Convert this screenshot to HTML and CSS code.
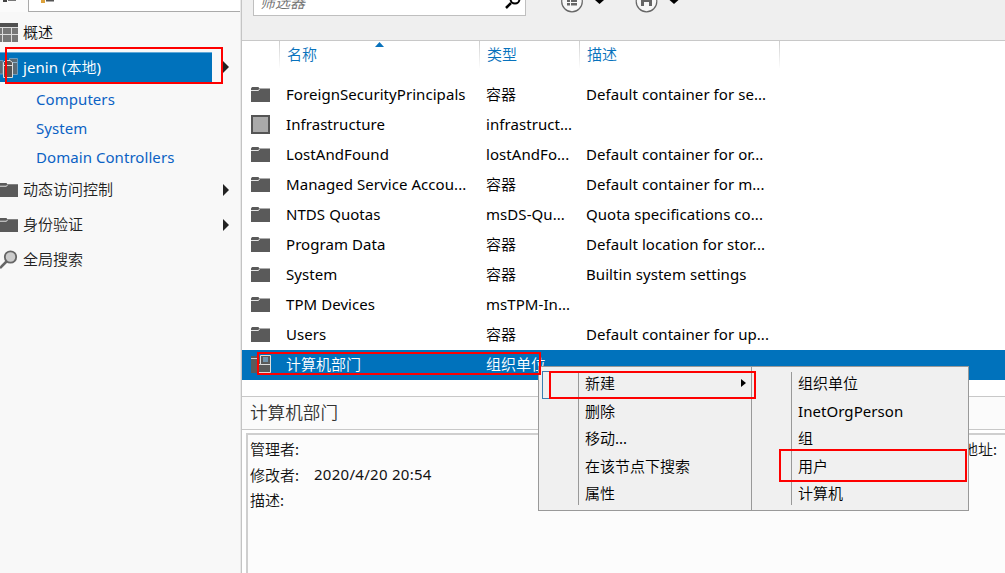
FILE: index.html
```
<!DOCTYPE html>
<html lang="zh-CN">
<head>
<meta charset="utf-8">
<title>Active Directory</title>
<link rel="stylesheet" href="styles.css">
</head>
<body>
<svg class="defs" aria-hidden="true">
  <symbol id="folder" viewBox="0 0 19 16"><path fill="#5a5a5a" d="M0 2.500 1 1h6.500l.8 1.500H19V16H0z"/><path d="M0 4.500h7.500l1-1.500" fill="none" stroke="#e4e4e4"/></symbol>
  <symbol id="arrow" viewBox="0 0 6 12"><path fill="#222" d="M0 0 6 6 0 12z"/></symbol>
</svg>
<div class="app">
  <nav class="sidebar">
    <div class="tabs">
      <div class="tab active"><svg width="20" height="2"><path d="M3 0h4v2H3z" fill="#444"/><path d="M8 0h8v1H8z" fill="#777"/></svg></div>
      <div class="tab other"><svg width="20" height="3"><path d="M0 0h4v3H0z" fill="#dca13b"/><path d="M5 0h8v1.500H5z" fill="#555"/></svg></div>
    </div>
    <div class="node overview"><svg class="ico" width="18" height="19" viewBox="0 0 18 19"><path fill="#777" d="M0 0h18v19H0z"/><path fill="#505050" d="M0 0h18v4H0z"/><path d="M0 4.500h18M0 11.500h18M2.500 5v14M11.500 5v14" stroke="#ddd" fill="none"/></svg><span>概述</span></div>
    <div class="node domain"><div class="domain-bar"><svg class="ico" width="18" height="22" viewBox="0 0 18 22"><path d="M0 3.500h3V17H0M9.500 1.500h8v16h-8z" fill="#5c6b75" stroke="#6f9cbd"/><path d="M10 5.500h7" stroke="#8bb0ca"/><path d="M3.500 5.500V20.500h9V5.500L10 3.500H5.500z" fill="#555" stroke="#ddd"/><path d="M4 8.500h8" stroke="#ddd"/></svg><span><b class="en">jenin (</b>本地<b class="en">)</b></span></div><svg class="arr" width="6" height="12"><use href="#arrow"/></svg></div>
    <div class="node child en"><span>Computers</span></div>
    <div class="node child en"><span>System</span></div>
    <div class="node child en"><span>Domain Controllers</span></div>
    <div class="node group"><svg class="ico" width="18" height="15" viewBox="1 0 18 16" preserveAspectRatio="none"><use href="#folder" width="19" height="16"/></svg><span>动态访问控制</span><svg class="arr" width="6" height="12"><use href="#arrow"/></svg></div>
    <div class="node group"><svg class="ico" width="18" height="15" viewBox="1 0 18 16" preserveAspectRatio="none"><use href="#folder" width="19" height="16"/></svg><span>身份验证</span><svg class="arr" width="6" height="12"><use href="#arrow"/></svg></div>
    <div class="node group"><svg class="ico" width="18" height="20" viewBox="0 0 18 20"><path d="M7 11 0 18" stroke="#666" stroke-width="2.500"/><circle cx="10.500" cy="7" r="5.700" fill="#ccc" stroke="#666" stroke-width="1.800"/></svg><span>全局搜索</span></div>
  </nav>
  <main class="main">
    <div class="toolbar">
      <div class="filter"><i>筛选器</i><svg width="16" height="9" viewBox="0 0 16 9"><path d="M6 3 1 8" stroke="#000" stroke-width="2.500"/><path d="M5.500-1A4.500 4.500 0 0 0 14.500-1" fill="none" stroke="#000" stroke-width="2"/></svg></div>
      <svg class="tools" width="120" height="13" viewBox="0 0 120 13"><circle cx="11" cy="1.500" r="10.300" fill="#f7f7f7" stroke="#666" stroke-width="1.200"/><path d="M6 0h3v2H6zm4 0h6v2h-6zM6 3h3v2.500H6zm4 0h6v2.500h-6z" fill="#666"/><path d="M34 0h9l-4.500 4z" fill="#000"/><circle cx="85.500" cy="1.500" r="10.300" fill="#f7f7f7" stroke="#666" stroke-width="1.200"/><path d="M80 0h11v6h-3V2h-5v4h-3z" fill="#666"/><path d="M108.500 0h9l-4.500 4z" fill="#000"/></svg>
    </div>
    <div class="thead"><div></div><div>名称<svg class="sort" width="9" height="5"><path d="M0 5 4.500 0 9 5z" fill="#0872bc"/></svg></div><div>类型</div><div>描述</div><div></div></div>
    <div class="rows">
      <div class="row"><svg width="19" height="16"><use href="#folder"/></svg><span class="en">ForeignSecurityPrincipals</span><span>容器</span><span class="en">Default container for se...</span></div>
      <div class="row"><svg width="19" height="19"><path d="M1 1h17v17H1z" fill="#aaa" stroke="#555" stroke-width="2"/></svg><span class="en">Infrastructure</span><span class="en">infrastruct...</span><span></span></div>
      <div class="row"><svg width="19" height="16"><use href="#folder"/></svg><span class="en">LostAndFound</span><span class="en">lostAndFo...</span><span class="en">Default container for or...</span></div>
      <div class="row"><svg width="19" height="16"><use href="#folder"/></svg><span class="en">Managed Service Accou...</span><span>容器</span><span class="en">Default container for m...</span></div>
      <div class="row"><svg width="19" height="16"><use href="#folder"/></svg><span class="en">NTDS Quotas</span><span class="en">msDS-Qu...</span><span class="en">Quota specifications co...</span></div>
      <div class="row"><svg width="19" height="16"><use href="#folder"/></svg><span class="en">Program Data</span><span>容器</span><span class="en">Default location for stor...</span></div>
      <div class="row"><svg width="19" height="16"><use href="#folder"/></svg><span class="en">System</span><span>容器</span><span class="en">Builtin system settings</span></div>
      <div class="row"><svg width="19" height="16"><use href="#folder"/></svg><span class="en">TPM Devices</span><span class="en">msTPM-In...</span><span></span></div>
      <div class="row"><svg width="19" height="16"><use href="#folder"/></svg><span class="en">Users</span><span>容器</span><span class="en">Default container for up...</span></div>
      <div class="row selected"><svg width="20" height="18"><path d="M0 1h8l1 1v16H0z" fill="#5a5a5a"/><path d="M0 3.500h8" stroke="#ccc"/><path d="M9.500.5h10v17h-13v-8h3z" fill="#5a5a5a" stroke="#ddd"/><path d="M9.500 9.500h10" stroke="#ddd"/><path d="M12 2h5v5h-5z" fill="#7295ae"/></svg><span>计算机部门</span><span>组织单位</span><span></span></div>
    </div>
    <h2 class="title">计算机部门</h2>
    <div class="detail">
      <dl class="facts"><dt>管理者:</dt><dd></dd><dt>修改者:</dt><dd class="en date">2020/4/20 20:54</dd><dt>描述:</dt><dd></dd></dl>
      <div class="site">地址:</div>
    </div>
  </main>
</div>
<div class="menus">
  <div class="menu"><div class="item current">新建<svg width="5" height="8" viewBox="0 0 6 12" preserveAspectRatio="none"><path d="M0 0 6 6 0 12z"/></svg></div><div class="item">删除</div><div class="item">移动...</div><div class="item">在该节点下搜索</div><div class="item">属性</div></div>
  <div class="menu submenu"><div class="item">组织单位</div><div class="item en">InetOrgPerson</div><div class="item">组</div><div class="item">用户</div><div class="item">计算机</div></div>
</div>
<div class="mark mark-domain"></div>
<div class="mark mark-row"></div>
<div class="mark mark-new"></div>
<div class="mark mark-user"></div>
</body>
</html>
```

FILE: styles.css
```
* { box-sizing: border-box; }
body { margin: 0; width: 1005px; height: 573px; overflow: hidden; background: #fff; color: #111; font: 350 15px/20px "Noto Sans CJK SC", sans-serif; }
svg { display: block; flex: none; }
.defs { position: absolute; width: 0; height: 0; }
.en { font-family: "Noto Sans", "Noto Sans CJK SC", sans-serif; font-size: 15px; letter-spacing: .06px; font-weight: 400; }
.app { display: flex; height: 573px; }

.sidebar { width: 242px; flex: none; background: #f8f8f8; border-right: 1px solid #c4c4c4; box-shadow: inset -1px 0 #e8e8e8; }
.tabs { display: flex; height: 12px; margin-right: 1px; }
.tab.active { width: 28px; background: #fbfbfb; }
.tab.other { flex: 1; padding-left: 12px; background: #fff; border-left: 1px solid #aaa; border-bottom: 1px solid #aaa; }
.node { display: flex; align-items: center; height: 35px; }
.node span { padding-bottom: 2px; }
.node .ico { margin-right: 5px; }
.overview { height: 40px; }
.overview span { padding-bottom: 0; }
.domain { height: 30px; margin-bottom: 3px; }
.domain-bar { display: flex; align-items: center; width: 212px; height: 30px; background: #0072bc; border-top: 1px solid #62a9d8; color: #fff; }
.arr { margin-left: auto; margin-right: 12px; }
.child { height: 29px; padding-left: 36px; color: #0b62c4; }
.group { color: #222; }

.main { flex: 1; min-width: 0; display: flex; flex-direction: column; }
.toolbar { height: 41px; display: flex; align-items: flex-start; background: #efefef; border-bottom: 1px solid #c8c8c8; }
.filter { width: 273px; height: 16px; margin-left: 11px; padding: 0 4px 0 6px; display: flex; justify-content: space-between; background: #fff; border: 1px solid #bfbfbf; border-top: 0; color: #707070; }
.filter i { line-height: 20px; margin-top: -8px; height: 20px; }
.tools { margin-left: 35px; }
.thead { height: 39px; display: grid; grid-template-columns: 37px 200px 100px 200px 1fr; color: #0872bc; }
.thead > div { height: 27px; padding: 3px 0 0 7px; position: relative; }
.thead > div + div { border-left: 1px solid; border-image: linear-gradient(#ccc, #fff) 1; }
.sort { position: absolute; left: 95px; top: 1px; }
.row { display: grid; grid-template-columns: 35px 200px 100px 1fr; align-items: center; height: 30px; padding: 0 0 2px 9px; color: #000; white-space: nowrap; }
.row.selected { background: #0072bc; color: #fff; }
.title { margin: 16px 0 0; height: 34px; padding-left: 8px; background: #fbfbfb; border: solid #c8c8c8; border-width: 1px 0; font-size: 17.6px; line-height: 30px; font-weight: 350; color: #333; }
.detail { flex: 1; display: flex; justify-content: space-between; margin: 3px 0 0 4px; padding: 4px 8px 0 2px; background: #fcfcfc; border: solid #cfcfcf; border-width: 2px 0 0 2px; }
.facts { display: grid; grid-template-columns: 64px 200px; grid-auto-rows: 25.5px; align-content: start; margin: 0; }
.facts dt, .facts dd { margin: 0; }
.facts .date { line-height: 19px; letter-spacing: .28px; }

.menus { position: absolute; left: 538px; top: 366px; display: flex; }
.menu { width: 214px; height: 145px; padding: 4px 0 0 3px; border: 1px solid #999; border-right: 0; background: linear-gradient(#999, #999) 39px 5px / 1px 133px no-repeat, #f0f0f0; color: #000; }
.item { height: 27.5px; padding: 0 0 3px 43px; display: flex; align-items: center; }
.item.current { justify-content: space-between; padding-right: 6px; box-shadow: inset 1px 1px #3c7fb1, inset 0 -1px #3c7fb1; }
.submenu { width: 218px; margin-left: -1px; border-right: 1px solid #999; }

.mark { position: absolute; border: 2px solid #fe0000; }
.mark-domain { left: 5px; top: 47px; width: 218px; height: 37px; }
.mark-row { left: 257px; top: 352px; width: 284px; height: 23px; }
.mark-new { left: 549px; top: 371px; width: 207px; height: 28px; }
.mark-user { left: 779px; top: 449px; width: 188px; height: 33px; }
```
